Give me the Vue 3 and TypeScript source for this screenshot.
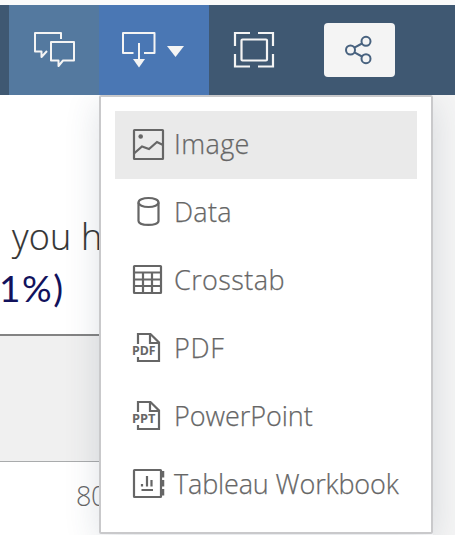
<script setup lang="ts">
import { ref } from 'vue'

type Kind = 'image' | 'data' | 'crosstab' | 'pdf' | 'ppt' | 'workbook'
interface Item { kind: Kind; label: string }

const items: Item[] = [
  { kind: 'image', label: 'Image' },
  { kind: 'data', label: 'Data' },
  { kind: 'crosstab', label: 'Crosstab' },
  { kind: 'pdf', label: 'PDF' },
  { kind: 'ppt', label: 'PowerPoint' },
  { kind: 'workbook', label: 'Tableau Workbook' },
]
const active = ref<Kind>('image')
</script>

<template>
  <div class="page">
    <header class="toolbar">
      <button class="tool comments" aria-label="Comments">
        <svg width="44" height="40" viewBox="0 0 44 40" fill="none" stroke="#f4f4f4" stroke-width="2" stroke-linejoin="round">
          <path d="M28 14V8H2V26.500H8.500V32L14 26" />
          <path d="M18 17H41V35.500H30L25.500 41V35.500H18Z" />
        </svg>
      </button>
      <button class="tool download" aria-label="Download">
        <svg width="64" height="40" viewBox="0 0 64 40" fill="none" stroke="#f4f4f4" stroke-width="2" stroke-linejoin="round">
          <path d="M12.500 28H2V8H33.500V28H23M18 18V35" />
          <path d="M12 34H24L18 42.500Z" fill="#f4f4f4" stroke="none" />
          <path d="M46 21H63L54.500 32Z" fill="#f4f4f4" stroke="none" />
        </svg>
      </button>
      <button class="tool fullscreen" aria-label="Full screen">
        <svg width="42" height="38" viewBox="0 0 42 38" fill="none" stroke="#f4f4f4" stroke-width="2.200">
          <path d="M2 15V2H17M25 2H40V15M40 23V35.500H25M17 35.500H2V23" />
          <rect x="8.500" y="8.500" width="25.500" height="21" rx="1" />
        </svg>
      </button>
      <button class="share" aria-label="Share">
        <svg width="28" height="30" viewBox="0 0 28 30" fill="none" stroke="#48627f" stroke-width="2">
          <circle cx="6.500" cy="15" r="4.500" />
          <circle cx="22" cy="6.300" r="4.500" />
          <circle cx="22" cy="23.700" r="4.500" />
          <path d="M10.400 12.700L18 8.500M10.400 17.300L18 21.500" />
        </svg>
      </button>
    </header>

    <main class="sheet">
      <section class="headline">
        <p class="line">you h</p>
        <p class="percent">1%)</p>
      </section>
      <section class="band"></section>
      <section class="axis"><span>80</span></section>
      <aside class="margin"></aside>
    </main>

    <ul class="menu">
      <li v-for="item in items" :key="item.kind" class="item" :class="[item.kind, { active: item.kind === active }]" @mouseenter="active = item.kind">
        <svg class="icon" width="34" height="34" viewBox="0 0 34 34" fill="none" stroke="#666" stroke-width="2.200">
          <template v-if="item.kind === 'image'">
            <rect x="2" y="2" width="29" height="29" rx=".5" />
            <circle cx="8.700" cy="8.500" r="2.300" fill="#666" stroke="none" />
            <path d="M2 25.500L10 18.500L17 21L25 14L31 17" />
          </template>
          <template v-else-if="item.kind === 'data'">
            <ellipse cx="16.500" cy="6.500" rx="10" ry="4.500" />
            <path d="M6.500 6.500V25C6.500 30.200 26.500 30.200 26.500 25V6.500" />
          </template>
          <template v-else-if="item.kind === 'crosstab'">
            <rect x="2" y="2" width="27" height="27" rx=".5" />
            <path d="M2 8.500H29M2 15.500H29M2 22H29M11 9V29M20 9V29" />
          </template>
          <template v-else-if="item.kind === 'pdf' || item.kind === 'ppt'">
            <path d="M6 12V2H18.500L27 10.500V29H6V25M18 2V11H27" />
            <text x="0" y="23" textLength="23.500" lengthAdjust="spacingAndGlyphs">{{ item.kind.toUpperCase() }}</text>
          </template>
          <template v-else>
            <rect x="2" y="2" width="27" height="27" rx=".5" />
            <path d="M30.500 3V9.500M30.500 12V18.500M30.500 21V27.500" stroke-width="3.500" />
            <path d="M9.500 22H21M10 16V18.500M15 8V18.500M19.500 12V18.500" />
          </template>
        </svg>
        <span class="label">{{ item.label }}</span>
      </li>
    </ul>
  </div>
</template>

<style>
body { margin: 0; overflow: hidden; background: #fff; }
</style>
<style scoped>
.page {
  position: relative;
  box-sizing: border-box;
  width: 455px;
  height: 535px;
  padding-top: 5px;
  overflow: hidden;
  background: #fafafa;
  font-family: "Open Sans", "Noto Sans", sans-serif;
  font-weight: 300;
}
button { margin: 0; border: 0; padding: 0; background: none; }
svg { display: block; overflow: visible; }
.toolbar { display: flex; height: 90px; padding-left: 9px; background: #3f5872; }
.tool { display: flex; align-items: flex-start; height: 90px; }
.comments { width: 90px; padding: 20px 0 0 24px; background: #54799f; }
.download { width: 110px; padding: 20px 0 0 22px; background: #4a77b4; }
.fullscreen { width: 115px; padding: 26px 0 0 24px; }
.share { display: flex; align-items: center; width: 71px; height: 54px; margin-top: 18px; padding-left: 20px; border-radius: 4px; background: #f4f4f4; }
.sheet {
  display: grid;
  grid-template: 241px 126px 73px / 433px 22px;
  background: #fff;
}
.margin { grid-column: 2; grid-row: 1 / 4; background: #f5f5f5; }
.headline { box-sizing: border-box; border-bottom: 2px solid #838383; }
p { margin: 0; white-space: nowrap; }
.line { padding: 117px 0 0 12px; font-size: 36px; line-height: 50px; letter-spacing: .2px; color: #333; -webkit-text-stroke: .2px #333; }
.percent { padding-top: 1px; font: 400 37px/50px Lato, sans-serif; text-indent: -1px; letter-spacing: 1.6px; color: #12125c; }
.band { box-sizing: border-box; background: #f0f0f0; border-bottom: 1px solid #a9abac; }
.axis { padding: 15px 0 0 76px; font-size: 27px; line-height: 37px; letter-spacing: -.5px; color: #666; }
.menu {
  position: absolute;
  left: 99px;
  top: 95px;
  box-sizing: border-box;
  width: 334px;
  height: 439px;
  margin: 0;
  padding: 14px;
  border: 2px solid #c9c9cb;
  border-radius: 2px;
  background: #fff;
  box-shadow: 0 8px 35px rgba(50, 70, 95, .16);
  clip-path: inset(0 -30px -10px -40px);
  list-style: none;
}
.item { display: flex; align-items: flex-start; height: 68px; }
.active { background: #eaeaea; }
.icon { margin: 17px 0 0 17px; }
.icon text { fill: #666; stroke: none; font: 700 12.5px "Open Sans", sans-serif; }
.label { margin-left: 8px; padding-top: 14px; font-size: 27px; line-height: 37px; color: #666; white-space: nowrap; -webkit-text-stroke: .25px #666; }
.image .label { letter-spacing: .4px; }
.data .label { letter-spacing: .3px; }
.crosstab .label { letter-spacing: .4px; }
.pdf .label { letter-spacing: .7px; }
.ppt .label { letter-spacing: -.05px; }
.workbook .label { letter-spacing: -.15px; }
</style>
